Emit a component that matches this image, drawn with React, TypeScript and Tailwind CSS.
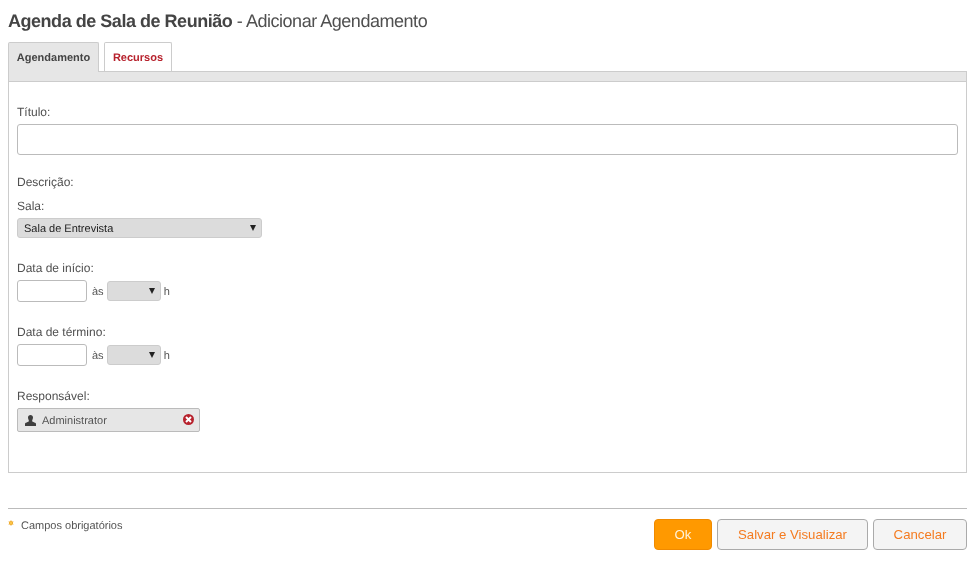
const inputBorder = 'border border-[#bbbbbb] rounded-[3px] bg-white';

function FieldLabel({ children, className = '' }: { children: React.ReactNode; className?: string }) {
  return <label className={`block text-[12px] leading-[14px] text-[#505050] ${className}`}>{children}</label>;
}

function Arrow() {
  return (
    <svg width="6" height="6" viewBox="0 0 6 6" className="block">
      <path d="M0 0H6L3 6Z" fill="#222222" />
    </svg>
  );
}

function TimeRow() {
  return (
    <div className="mt-[5px] flex h-[22px] items-center text-[11px] text-[#555555]">
      <div className={`h-[22px] w-[70px] ${inputBorder}`} />
      <span className="ml-[5px] pt-[2px]">às</span>
      <div className="ml-[3px] flex h-[20px] w-[54px] items-center justify-end rounded-[3px] border border-[#cccccc] bg-[#dcdcdc] pr-[5px]">
        <Arrow />
      </div>
      <span className="ml-[3px] pt-[2px]">h</span>
    </div>
  );
}

export default function App() {
  return (
    <div className="h-[585px] w-[975px] overflow-hidden px-[8px] font-['Liberation_Sans',Arial,sans-serif] will-change-transform [text-rendering:geometricPrecision]">
      <h1 className="pt-[10px] text-[18px] leading-[22px] tracking-[-0.47px] text-[#505050]">
        <b className="text-[#444444]">Agenda de Sala de Reunião</b> - Adicionar Agendamento
      </h1>

      {/* tabs */}
      <div className="mt-[10px] flex h-[29px] items-start text-[11px] font-bold">
        <div className="relative z-10 flex h-[30px] w-[91px] items-center justify-center rounded-t-[2px] border border-b-0 border-[#cccccc] bg-[#e6e6e6] pt-[2px] text-[#444444]">
          Agendamento
        </div>
        <div className="ml-[5px] flex h-[29px] w-[68px] items-center justify-center rounded-t-[2px] border border-b-0 border-[#cccccc] bg-white pt-[2px] text-[#b7222d]">
          Recursos
        </div>
      </div>

      {/* panel */}
      <div className="h-[402px] w-[959px] border border-t-0 border-[#cccccc]">
        <div className="h-[11px] border-y border-[#cccccc] bg-[#e6e6e6]" />
        <div className="px-[8px] pt-[23px]">
          <FieldLabel>Título:</FieldLabel>
          <div className={`mt-[5px] h-[31px] w-[941px] ${inputBorder}`} />

          <FieldLabel className="mt-[20px]">Descrição:</FieldLabel>

          <FieldLabel className="mt-[10px]">Sala:</FieldLabel>
          <div className="mt-[5px] flex h-[20px] w-[245px] items-center justify-between rounded-[3px] border border-[#cccccc] bg-[#dcdcdc] pl-[6px] pr-[5px] text-[11px] text-[#222222]">
            <span className="pt-[2px]">Sala de Entrevista</span>
            <Arrow />
          </div>

          <FieldLabel className="mt-[23px]">Data de início:</FieldLabel>
          <TimeRow />

          <FieldLabel className="mt-[23px]">Data de término:</FieldLabel>
          <TimeRow />

          <FieldLabel className="mt-[23px]">Responsável:</FieldLabel>
          <div className="mt-[5px] flex h-[24px] w-[183px] items-center rounded-[2px] border border-[#bbbbbb] bg-[#e6e6e6] pl-[7px] pr-[5px] text-[11px] text-[#555555]">
            <svg width="11" height="11" viewBox="0 0 11 11" className="block">
              <path d="M5.5 0C7 0 8 1 8 2.5C8 3.7 7.5 4.6 7.2 5.2V6.3C7.2 6.8 8 7 9.3 7.4C10.5 7.8 11 8.1 11 9V11H0V9C0 8.1 0.5 7.8 1.7 7.4C3 7 3.8 6.8 3.8 6.3V5.2C3.5 4.6 3 3.7 3 2.5C3 1 4 0 5.5 0Z" fill="#3f3f3f" />
            </svg>
            <span className="ml-[6px] flex-1 pt-[2px]">Administrator</span>
            <svg width="11" height="11" viewBox="0 0 11 11" className="-mt-[1px] block">
              <circle cx="5.5" cy="5.5" r="5.5" fill="#b7222d" />
              <path d="M3 3L8 8M8 3L3 8" stroke="#ffffff" strokeWidth="2" />
            </svg>
          </div>
        </div>
      </div>

      {/* footer */}
      <div className="mt-[35px] flex w-[959px] justify-between border-t border-[#bbbbbb]">
        <div className="flex items-start pt-[11px] text-[11px] leading-[13px] text-[#555555]">
          <svg width="6" height="6" viewBox="0 0 6 6" className="block">
            <path d="M3 0L3.8 1.6L5.6 1.4L4.6 3L5.6 4.6L3.8 4.4L3 6L2.2 4.4L0.4 4.6L1.4 3L0.4 1.4L2.2 1.6Z" fill="#eda41a" />
            <circle cx="3" cy="3" r="1" fill="#ffcf55" />
          </svg>
          <span className="ml-[7px]">Campos obrigatórios</span>
        </div>
        <div className="flex gap-[5px] pt-[10px] text-[13.2px]">
          <button className="h-[31px] w-[58px] rounded-[4px] border border-[#f08a00] bg-[#ff9900] text-[#fff3dc]">Ok</button>
          <button className="h-[31px] w-[151px] rounded-[4px] border border-[#aaaaaa] bg-[#f4f4f4] text-[#f47b20]">Salvar e Visualizar</button>
          <button className="h-[31px] w-[94px] rounded-[4px] border border-[#aaaaaa] bg-[#f4f4f4] text-[#f47b20]">Cancelar</button>
        </div>
      </div>
    </div>
  );
}
